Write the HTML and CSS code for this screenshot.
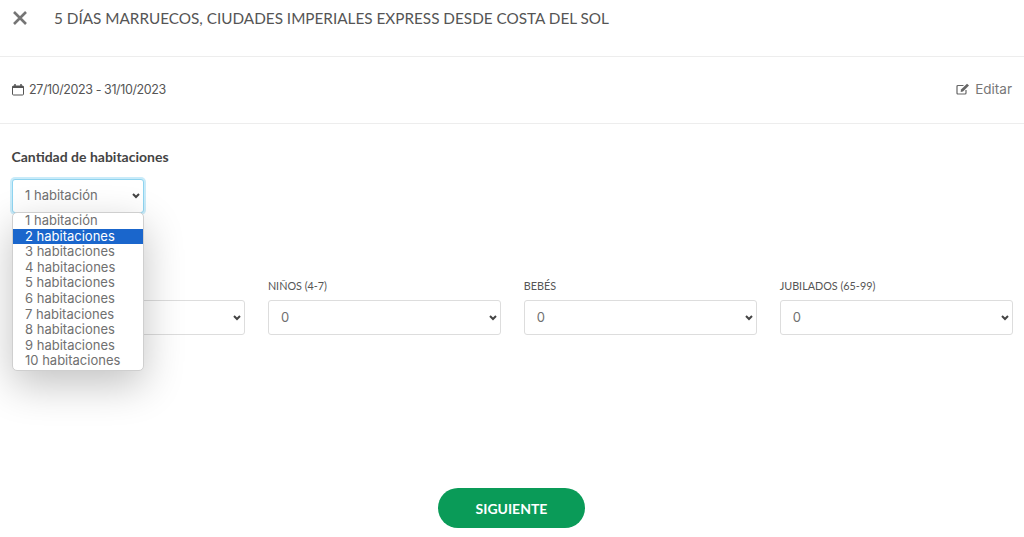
FILE: index.html
```html
<!DOCTYPE html>
<html lang="en">
<head>
    <meta charset="UTF-8">
    <meta name="viewport" content="width=device-width, initial-scale=1.0">
    <title>Reserva</title>
    <link rel="stylesheet" href="styles.css">
</head>
<body>
    <div class="header">
        <svg class="close-icon" width="16" height="16" viewBox="0 0 16 16"><path d="M2 2L14 14M14 2L2 14" stroke="#757575" stroke-width="2.600" fill="none"/></svg>
        <h1>5 DÍAS MARRUECOS, CIUDADES IMPERIALES EXPRESS DESDE COSTA DEL SOL</h1>
    </div>

    <div class="date-row">
        <div class="dates">
            <svg width="12" height="13" viewBox="0 0 12 13"><path d="M1.5 3H10.5Q11.500 3 11.500 4V11Q11.500 12 10.500 12H1.500Q.5 12 .5 11V4Q.5 3 1.500 3Z" stroke="#555" fill="none"/><path d="M.5 3H11.500V5H.5Z" fill="#555"/><path d="M3 1V3.500M9 1V3.500" stroke="#555" stroke-width="1.500"/></svg>
            <span>27/10/2023 - 31/10/2023</span>
        </div>
        <div class="edit">
            <svg width="14" height="12" viewBox="0 0 14 12"><path d="M10 7V10Q10 11 9 11H2Q1 11 1 10V3.500Q1 2.500 2 2.500H7.500" stroke="#666" stroke-width="1.200" fill="none"/><path d="M5 6.500L11 .7L13 2.600L7 8.500L4.700 8.900Z" fill="#666"/></svg>
            <span>Editar</span>
        </div>
    </div>

    <div class="rooms">
        <label class="rooms-label" for="rooms">Cantidad de habitaciones</label>
        <div class="rooms-select">
            <select id="rooms" class="select focused">
                <option>1 habitación</option>
            </select>
            <ul class="dropdown">
                <li>1 habitación</li>
                <li class="selected">2 habitaciones</li>
                <li>3 habitaciones</li>
                <li>4 habitaciones</li>
                <li>5 habitaciones</li>
                <li>6 habitaciones</li>
                <li>7 habitaciones</li>
                <li>8 habitaciones</li>
                <li>9 habitaciones</li>
                <li>10 habitaciones</li>
            </ul>
        </div>
    </div>

    <div class="guests">
        <div class="guest">
            <label></label>
            <select class="select"></select>
        </div>
        <div class="guest">
            <label>NIÑOS (4-7)</label>
            <select class="select"><option>0</option></select>
        </div>
        <div class="guest">
            <label>BEBÉS</label>
            <select class="select"><option>0</option></select>
        </div>
        <div class="guest">
            <label>JUBILADOS (65-99)</label>
            <select class="select"><option>0</option></select>
        </div>
    </div>

    <div class="actions">
        <button class="next">SIGUIENTE</button>
    </div>
</body>
</html>
```

FILE: styles.css
```css
body {
    margin: 0;
    background-color: #ffffff;
    color: #555555;
    font-family: Inter, "Open Sans", sans-serif;
    font-size: 13px;
    overflow: hidden;
}

.header {
    display: flex;
    align-items: center;
    height: 36px;
    padding: 0 12px 20px;
    border-bottom: 1px solid #ededed;
}

.close-icon {
    margin-right: 26px;
}

h1 {
    margin: 0;
    font-family: Lato, sans-serif;
    font-size: 15.3px;
    font-weight: 400;
    color: #555555;
}

.date-row {
    display: flex;
    justify-content: space-between;
    align-items: center;
    height: 64px;
    padding: 0 12px 2px;
    border-bottom: 1px solid #ededed;
}

.dates,
.edit {
    display: flex;
    align-items: center;
    gap: 5px;
}

.dates {
    font-size: 12.5px;
    letter-spacing: -0.4px;
}

.edit {
    color: #777777;
    font-size: 13.5px;
}

.rooms {
    padding: 25px 12px 0 11.5px;
}

.rooms-label {
    display: block;
    margin-bottom: 14px;
    font-family: Lato, sans-serif;
    font-size: 14px;
    font-weight: 700;
    line-height: 16px;
    color: #444444;
}

.rooms-select {
    position: relative;
    left: 0.5px;
    width: 132px;
}

.select {
    display: block;
    width: 100%;
    height: 35px;
    padding: 0 0 2px 12px;
    appearance: none;
    background: #ffffff url("data:image/svg+xml,%3Csvg xmlns='http://www.w3.org/2000/svg' width='8' height='6'%3E%3Cpath d='M1 1L4 4L7 1' stroke='%23444' stroke-width='2' fill='none'/%3E%3C/svg%3E") no-repeat right 3px center;
    border: 1px solid #dddddd;
    border-radius: 3px;
    color: #707070;
    font-family: Inter, "Open Sans", sans-serif;
    font-size: 13px;
}

.focused {
    height: 34px;
    border-color: #8fd4f0;
    box-shadow: 0 0 0 2px #c9ebf9;
    outline: none;
}

.dropdown {
    position: absolute;
    top: 33px;
    left: 0;
    z-index: 2;
    width: 132px;
    box-sizing: border-box;
    margin: 0;
    padding: 0 0 1px;
    list-style: none;
    background-color: #ffffff;
    border: 1px solid #cfcfcf;
    border-radius: 5px;
    box-shadow: 0 14px 40px rgba(0, 0, 0, 0.24);
    color: #707070;
    font-size: 13px;
}

.dropdown li {
    height: 15.6px;
    line-height: 15.6px;
    padding-left: 12px;
}

.dropdown .selected {
    background-color: #1a66cc;
    color: #ffffff;
}

.guests {
    display: grid;
    grid-template-columns: repeat(4, 1fr);
    column-gap: 23px;
    padding: 66px 11.5px 0 12px;
}

.guest label {
    display: block;
    min-height: 14px;
    margin-bottom: 7px;
    font-family: Lato, sans-serif;
    font-size: 10.8px;
    line-height: 14px;
    color: #555555;
}

.actions {
    display: flex;
    justify-content: center;
    padding: 153px 1px 0 0;
}

.next {
    width: 147px;
    height: 40px;
    border: none;
    border-radius: 20px;
    background-color: #0a9b58;
    color: #ffffff;
    font-family: Lato, sans-serif;
    font-size: 14px;
    font-weight: 700;
}
```
